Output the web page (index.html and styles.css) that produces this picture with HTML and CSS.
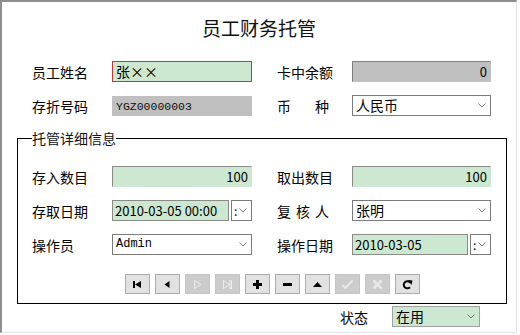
FILE: index.html
```html
<!DOCTYPE html>
<html lang="zh-CN">
<head>
<meta charset="utf-8">
<title>员工财务托管</title>
<link rel="stylesheet" href="styles.css">
</head>
<body>
<div class="window">
  <h1 class="title">员工财务托管</h1>
  <div class="grid top">
    <span class="lbl">员工姓名</span>
    <div class="field name">张××</div>
    <span class="lbl j">卡中余额</span>
    <div class="field inset-gray num">0</div>

    <span class="lbl">存折号码</span>
    <div class="field gray mono">YGZ00000003</div>
    <span class="lbl j">币种</span>
    <div class="field select"><span>人民币</span><svg class="chev" width="8" height="5" viewBox="0 0 8 5"><polyline points="0.5,0.5 4,4 7.5,0.5" fill="none" stroke="#7a7a7a" stroke-width="1"/></svg></div>
  </div>

  <fieldset class="group">
    <legend>托管详细信息</legend>
    <div class="grid inner">
      <span class="lbl">存入数目</span>
      <div class="field green num">100</div>
      <span class="lbl j">取出数目</span>
      <div class="field green num">100</div>

      <span class="lbl">存取日期</span>
      <div class="dt">
        <div class="field dtbox">2010-03-05 00:00</div>
        <div class="spin"><span class="colon">:</span><svg class="chev" width="8" height="5" viewBox="0 0 8 5"><polyline points="0.5,0.5 4,4 7.5,0.5" fill="none" stroke="#7a7a7a" stroke-width="1"/></svg></div>
      </div>
      <span class="lbl j">复核人</span>
      <div class="field select"><span>张明</span><svg class="chev" width="8" height="5" viewBox="0 0 8 5"><polyline points="0.5,0.5 4,4 7.5,0.5" fill="none" stroke="#7a7a7a" stroke-width="1"/></svg></div>

      <span class="lbl">操作员</span>
      <div class="field select"><span class="mono2">Admin</span><svg class="chev" width="8" height="5" viewBox="0 0 8 5"><polyline points="0.5,0.5 4,4 7.5,0.5" fill="none" stroke="#7a7a7a" stroke-width="1"/></svg></div>
      <span class="lbl j">操作日期</span>
      <div class="dt">
        <div class="field dtbox">2010-03-05</div>
        <div class="spin"><span class="colon">:</span><svg class="chev" width="8" height="5" viewBox="0 0 8 5"><polyline points="0.5,0.5 4,4 7.5,0.5" fill="none" stroke="#7a7a7a" stroke-width="1"/></svg></div>
      </div>
    </div>

    <div class="nav">
      <button class="btn"><svg width="11" height="9" viewBox="0 0 11 9"><rect x="1" y="1" width="2" height="7" fill="#000"/><polygon points="3,4.5 9,1 9,8" fill="#000"/></svg></button>
      <button class="btn"><svg width="11" height="9" viewBox="0 0 11 9"><polygon points="2.5,4.5 7.5,1 7.5,8" fill="#000"/></svg></button>
      <button class="btn off"><svg width="11" height="11" viewBox="0 0 11 11"><polygon points="2.5,1.5 9,5.5 2.5,9.5" fill="none" stroke="#ececec" stroke-width="1"/></svg></button>
      <button class="btn off"><svg width="11" height="11" viewBox="0 0 11 11"><polygon points="1.5,1.5 7.5,5.5 1.5,9.5" fill="none" stroke="#ececec" stroke-width="1"/><rect x="8" y="1.5" width="1.5" height="8" fill="none" stroke="#ececec" stroke-width="1"/></svg></button>
      <button class="btn"><svg width="11" height="11" viewBox="0 0 11 11"><rect x="4" y="1" width="3" height="9" fill="#000"/><rect x="1" y="4" width="9" height="3" fill="#000"/></svg></button>
      <button class="btn"><svg width="11" height="11" viewBox="0 0 11 11"><rect x="1" y="4" width="9" height="3" fill="#000"/></svg></button>
      <button class="btn"><svg width="11" height="11" viewBox="0 0 11 11"><polygon points="5.5,3 10,8 1,8" fill="#000"/></svg></button>
      <button class="btn off"><svg width="13" height="11" viewBox="0 0 13 11"><polyline points="1.5,6 4.5,9 11.5,1.5" fill="none" stroke="#e8e8e8" stroke-width="2"/></svg></button>
      <button class="btn off"><svg width="11" height="11" viewBox="0 0 11 11"><path d="M1.5,1.5 L9.5,9.5 M9.5,1.5 L1.5,9.5" fill="none" stroke="#e8e8e8" stroke-width="2.5"/></svg></button>
      <button class="btn"><svg width="11" height="11" viewBox="0 0 11 11"><path d="M8.5,4 A3.6,3.6 0 1 0 8,8.2" fill="none" stroke="#000" stroke-width="2"/><polygon points="6,1 10.5,1.5 9.5,6" fill="#000"/></svg></button>
    </div>
  </fieldset>

  <div class="status">
    <span class="lbl">状态</span>
    <div class="field select green-sel"><span>在用</span><svg class="chev" width="8" height="5" viewBox="0 0 8 5"><polyline points="0.5,0.5 4,4 7.5,0.5" fill="none" stroke="#7a7a7a" stroke-width="1"/></svg></div>
  </div>
</div>
</body>
</html>
```

FILE: styles.css
```css
* { box-sizing: border-box; }

body {
  margin: 0;
  background: #fff;
  font-family: "Noto Sans CJK SC", "Noto Sans", sans-serif;
  font-size: 14px;
  color: #000;
}

.window {
  width: 517px;
  height: 333px;
  border-left: 2px solid #8e8e8e;
  border-top: 2px solid #8e8e8e;
  border-right: 1px solid #e2e2e2;
  border-bottom: 1px solid #e2e2e2;
  display: flex;
  flex-direction: column;
}

.title {
  margin: 14px 0 21px;
  font-size: 19px;
  line-height: 24px;
  font-weight: normal;
  text-align: center;
  color: #111;
}

.grid {
  display: grid;
  grid-template-columns: 80px 140px 100px 139px;
  row-gap: 13px;
  align-items: center;
}

.top { padding-left: 30px; }

.lbl {
  line-height: 20px;
  white-space: nowrap;
}

.lbl.j {
  width: 52px;
  margin-left: 25px;
  text-align: justify;
  text-align-last: justify;
}

.field {
  height: 21px;
  line-height: 19px;
  padding: 0 3px;
  overflow: hidden;
  white-space: nowrap;
  border: 1px solid transparent;
}

.name {
  background: #cde8d0;
  border-color: #c8343c;
}

.inset-gray {
  background: #c0c0c0;
  border-top-color: #7e7e7e;
  border-left-color: #7e7e7e;
}

.gray {
  background: #c0c0c0;
  height: 20px;
}

.num {
  text-align: right;
  font-size: 13px;
}

.mono {
  font-family: "Liberation Mono", monospace;
  font-size: 11.5px;
  color: #111;
}

.mono2 {
  font-family: "Liberation Mono", monospace;
  font-size: 12px;
}

.select {
  background: #fff;
  border-color: #7a7a7a;
  display: flex;
  align-items: center;
  justify-content: space-between;
  padding: 0 4px 0 3px;
}

.chev { flex: none; }

.green {
  background: #cde8d0;
  border-top-color: #8a8a8a;
  border-left-color: #8a8a8a;
}

.dt {
  display: flex;
  gap: 2px;
}

.dtbox {
  flex: 1;
  background: #cde8d0;
  border-color: #8a8a8a;
  font-size: 13px;
  padding: 0 2px;
}

.spin {
  width: 21px;
  height: 21px;
  border: 1px solid #7a7a7a;
  background: #fff;
  display: flex;
  align-items: center;
  padding-left: 2px;
  gap: 2px;
}

.colon {
  font-size: 12px;
  line-height: 12px;
}

.group {
  margin: 12px 9px 0 15px;
  padding: 18px 0 9px 14px;
  border: 1px solid #000;
  min-width: 0;
}

.group legend {
  margin-left: 0;
  padding: 0;
  font-size: 14px;
  line-height: 20px;
  color: #111;
}

.nav {
  display: flex;
  gap: 5px;
  margin: 19px 0 0 93px;
}

.btn {
  width: 25px;
  height: 20px;
  padding: 0;
  border: 1px solid #adadad;
  background: #e1e1e1;
  display: flex;
  align-items: center;
  justify-content: center;
}

.btn.off {
  background: #cccccc;
  border-color: #c4c4c4;
}

.status {
  display: flex;
  align-items: center;
  justify-content: flex-end;
  gap: 24px;
  padding-right: 36px;
  margin-top: 2px;
}

.status .select {
  width: 88px;
}

.green-sel {
  background: #cde8d0;
  border-color: #a0a0a0;
}
```
